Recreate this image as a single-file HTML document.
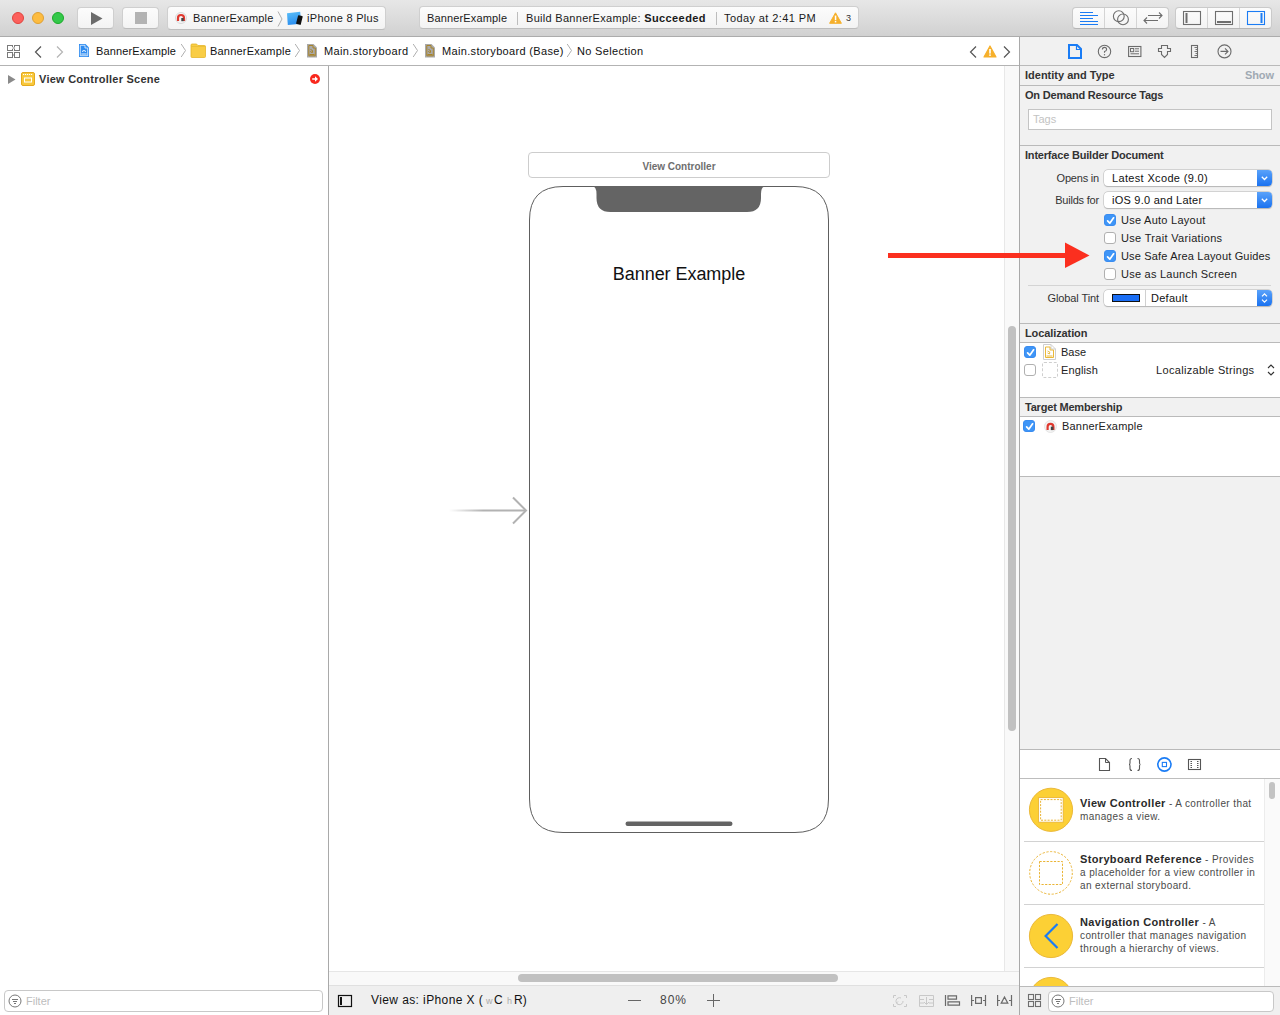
<!DOCTYPE html>
<html><head><meta charset="utf-8">
<style>
*{box-sizing:border-box;margin:0;padding:0}
html,body{width:1280px;height:1015px;overflow:hidden;background:#fff;font-family:"Liberation Sans",sans-serif;color:#262626;font-size:12px}
.a{position:absolute}
.t{position:absolute;white-space:nowrap;line-height:1}
#toolbar{position:absolute;left:0;top:0;width:1280px;height:37px;background:linear-gradient(#e7e7e7,#d1d1d1);border-bottom:1px solid #acacac}
.tl{position:absolute;top:12px;width:12px;height:12px;border-radius:50%}
.btn{position:absolute;top:7px;height:22px;background:linear-gradient(#fcfcfc,#f3f3f3);border:1px solid #cfcfcf;border-bottom-color:#bdbdbd;border-radius:4px}
#crumbs{position:absolute;left:0;top:37px;width:1019px;height:29px;background:#fff;border-bottom:1px solid #b3b3b3}
#nav{position:absolute;left:0;top:66px;width:329px;height:949px;background:#fff;border-right:1px solid #a9a9a9}
#canvas{position:absolute;left:329px;top:66px;width:690px;height:949px;background:#fff}
#insp{position:absolute;left:1019px;top:37px;width:261px;height:978px;background:#f1f1f1;border-left:1px solid #a9a9a9}
.hl{position:absolute;height:1px;background:#c8c8c8}
.cb{position:absolute;width:12px;height:12px;border-radius:3px;background:#fff;border:1px solid #b0b0b0}
.cb.on{background:#3e95f7;border-color:#3a8cf0}
.cb.on svg{position:absolute;left:1px;top:1px}
</style></head><body>
<!-- TOOLBAR -->
<div id="toolbar">
  <div class="tl" style="left:12px;background:#fc605c;border:1px solid #e0443e"></div>
  <div class="tl" style="left:32px;background:#fdbc40;border:1px solid #dea034"></div>
  <div class="tl" style="left:52px;background:#34c84a;border:1px solid #1aab29"></div>
  <div class="btn" style="left:77px;width:37px"><svg class="a" style="left:12px;top:3px" width="13" height="15"><path d="M1 1 L12.5 7.5 L1 14 Z" fill="#6b6b6b"/></svg></div>
  <div class="btn" style="left:122px;width:37px"><div class="a" style="left:12px;top:4px;width:12px;height:12px;background:#b3b3b3"></div></div>
  <div class="btn" style="left:167px;width:219px;top:6px;height:24px">
    <svg class="a" style="left:7px;top:5px" width="12" height="12"><circle cx="6" cy="6" r="5.5" fill="#f4f4f4" stroke="#d8d8d8" stroke-width="1"/><path d="M3 9 V6 A3 3 0 0 1 9 6 V9" fill="none" stroke="#e0392f" stroke-width="2.2"/><rect x="6.3" y="6" width="2.4" height="3.2" fill="#444"/></svg>
    <div class="t" style="left:25px;top:6px;font-size:11px;letter-spacing:0.17px;color:#1a1a1a">BannerExample</div>
    <svg class="a" style="left:109px;top:3px" width="7" height="18"><path d="M1 1.5 L5 9 L1 16.5" fill="none" stroke="#b0b0b0" stroke-width="1"/></svg>
    <svg class="a" style="left:118px;top:4px" width="17" height="15"><defs><linearGradient id="ipg" x1="0" y1="0" x2="0.3" y2="1"><stop offset="0" stop-color="#5cc0f8"/><stop offset="1" stop-color="#2a8ef0"/></linearGradient></defs><path d="M1 2.2 L14.2 0.8 L15 12.8 L1.8 14 Z" fill="url(#ipg)"/><rect x="11" y="4.6" width="4.8" height="9" rx="0.8" fill="#111" transform="rotate(14 13.4 9.1)"/></svg>
    <div class="t" style="left:139px;top:6px;font-size:11px;letter-spacing:0.3px;color:#1a1a1a">iPhone 8 Plus</div>
  </div>
  <div class="btn" style="left:419px;width:440px;top:6px;height:23px">
    <div class="t" style="left:7px;top:6px;font-size:11px;letter-spacing:0.15px;color:#1a1a1a">BannerExample</div>
    <div class="a" style="left:97px;top:5px;width:1px;height:13px;background:#bdbdbd"></div>
    <div class="t" style="left:106px;top:6px;font-size:11px;letter-spacing:0.3px;color:#1a1a1a">Build BannerExample: <b style="letter-spacing:0.4px">Succeeded</b></div>
    <div class="a" style="left:296px;top:5px;width:1px;height:13px;background:#bdbdbd"></div>
    <div class="t" style="left:304px;top:6px;font-size:11px;letter-spacing:0.4px;color:#1a1a1a">Today at 2:41 PM</div>
    <svg class="a" style="left:409px;top:5px" width="13" height="12"><path d="M6.5 0.8 L12.4 11.3 L0.6 11.3 Z" fill="#f6b02c" stroke="#f6b02c" stroke-width="1" stroke-linejoin="round"/><rect x="5.8" y="3.6" width="1.5" height="4.6" fill="#fff"/><rect x="5.8" y="9" width="1.5" height="1.4" fill="#fff"/></svg>
    <div class="t" style="left:426px;top:7px;font-size:9px;color:#333">3</div>
  </div>
  <!-- right groups -->
  <div class="btn" style="left:1072px;width:97px;top:7px;height:22px;border-color:#cacaca;border-bottom-color:#b5b5b5"></div>
  <div class="a" style="left:1104px;top:8px;width:1px;height:20px;background:#d4d4d4"></div>
  <div class="a" style="left:1136px;top:8px;width:1px;height:20px;background:#d4d4d4"></div>
  <div class="btn" style="left:1175px;width:97px;top:7px;height:22px;border-color:#cacaca;border-bottom-color:#b5b5b5"></div>
  <div class="a" style="left:1207px;top:8px;width:1px;height:20px;background:#d4d4d4"></div>
  <div class="a" style="left:1239px;top:8px;width:1px;height:20px;background:#d4d4d4"></div>
  <svg class="a" style="left:1070px;top:0" width="210" height="36">
    <g stroke="#1b7cf4" stroke-width="1.2"><path d="M10 12.5H23M10 15.5H28M10 18.5H23M10 21.5H28M10 24.5H28"/></g>
    <circle cx="48.8" cy="16.2" r="5.4" fill="none" stroke="#6e6e6e" stroke-width="1.1"/><circle cx="53" cy="19.4" r="5.4" fill="none" stroke="#6e6e6e" stroke-width="1.1"/>
    <g fill="none" stroke="#6e6e6e" stroke-width="1.1"><path d="M78 15.5H92M89 12.5L92 15.5L89 18.5M74 20.5H88M77 17.5L74 20.5L77 23.5"/></g>
    <rect x="113.5" y="11.5" width="17" height="13" fill="none" stroke="#6e6e6e" stroke-width="1.1"/><rect x="115.5" y="13" width="2" height="10" fill="#6e6e6e"/>
    <rect x="145.5" y="11.5" width="17" height="13" fill="none" stroke="#6e6e6e" stroke-width="1.1"/><rect x="147" y="21" width="14" height="2" fill="#6e6e6e"/>
    <rect x="177.5" y="11.5" width="17" height="13" fill="none" stroke="#1b7cf4" stroke-width="1.1"/><rect x="190.5" y="13" width="2" height="10" fill="#1b7cf4"/>
  </svg>
</div>
<!-- CRUMBS -->
<div id="crumbs">
  <svg class="a" style="left:7px;top:8px" width="14" height="13"><g fill="none" stroke="#7a7a7a" stroke-width="1"><rect x="0.5" y="0.5" width="5" height="5"/><rect x="7.5" y="0.5" width="5" height="5"/><rect x="0.5" y="7.5" width="5" height="5"/><rect x="7.5" y="7.5" width="5" height="5"/></g><rect x="5" y="2" width="3" height="2" fill="#fff"/><path d="M5.5 3H8M5.5 10H8" stroke="#7a7a7a"/></svg>
  <svg class="a" style="left:33px;top:8px" width="10" height="14"><path d="M8 1.5 L2.5 7 L8 12.5" fill="none" stroke="#555" stroke-width="1.2"/></svg>
  <svg class="a" style="left:55px;top:8px" width="10" height="14"><path d="M2 1.5 L7.5 7 L2 12.5" fill="none" stroke="#b4b4b4" stroke-width="1.2"/></svg>
  <svg class="a" style="left:78px;top:6px" width="12" height="15"><path d="M1 1 H7.5 L11 4.5 V14 H1 Z" fill="#2f8cf0"/><path d="M2.3 2.3 H7 V5 H9.7 V12.7 H2.3 Z" fill="none" stroke="#fff" stroke-width="0.8" opacity="0.9"/><path d="M4 8.5 Q6 6.5 8 8.5" fill="none" stroke="#fff" stroke-width="1"/><path d="M3.3 11H8.7" stroke="#fff" stroke-width="0.9"/></svg>
  <div class="t" style="left:96px;top:9px;font-size:11px;letter-spacing:0.14px;color:#111">BannerExample</div>
  <svg class="a" style="left:180px;top:6px" width="7" height="15"><path d="M1.2 1 L5.5 7.5 L1.2 14" fill="none" stroke="#b0b0b0" stroke-width="1"/></svg>
  <svg class="a" style="left:190px;top:6px" width="16" height="15"><path d="M1 2 Q1 1 2 1 H6 Q7 1 7.5 2 L8 2.5 H14.5 Q15.5 2.5 15.5 3.5 V13.5 Q15.5 14.5 14.5 14.5 H2 Q1 14.5 1 13.5 Z" fill="#f9cd45" stroke="#e5b52a" stroke-width="0.8"/><path d="M1 3.5H15.5" stroke="#e9bd35" stroke-width="0.8"/></svg>
  <div class="t" style="left:210px;top:9px;font-size:11px;letter-spacing:0.21px;color:#111">BannerExample</div>
  <svg class="a" style="left:294px;top:6px" width="7" height="15"><path d="M1.2 1 L5.5 7.5 L1.2 14" fill="none" stroke="#b0b0b0" stroke-width="1"/></svg>
  <svg class="a" style="left:306px;top:6px" width="12" height="15"><path d="M1 1 H7.5 L11 4.5 V14.5 H1 Z" fill="#a9a9a9"/><path d="M2.8 2.5 H7 V5 H9.3 V12.8 H2.8 Z" fill="none" stroke="#a8842a" stroke-width="1"/><path d="M4.5 6.5 Q7.5 7 6.5 9.5 Q5 10 4.5 8" fill="none" stroke="#a8842a" stroke-width="1"/><path d="M3.5 11.5H8.5" stroke="#a8842a" stroke-width="1"/></svg>
  <div class="t" style="left:324px;top:9px;font-size:11px;letter-spacing:0.38px;color:#111">Main.storyboard</div>
  <svg class="a" style="left:412px;top:6px" width="7" height="15"><path d="M1.2 1 L5.5 7.5 L1.2 14" fill="none" stroke="#b0b0b0" stroke-width="1"/></svg>
  <svg class="a" style="left:424px;top:6px" width="12" height="15"><path d="M1 1 H7.5 L11 4.5 V14.5 H1 Z" fill="#a9a9a9"/><path d="M2.8 2.5 H7 V5 H9.3 V12.8 H2.8 Z" fill="none" stroke="#a8842a" stroke-width="1"/><path d="M4.5 6.5 Q7.5 7 6.5 9.5 Q5 10 4.5 8" fill="none" stroke="#a8842a" stroke-width="1"/><path d="M3.5 11.5H8.5" stroke="#a8842a" stroke-width="1"/></svg>
  <div class="t" style="left:442px;top:9px;font-size:11px;letter-spacing:0.34px;color:#111">Main.storyboard (Base)</div>
  <svg class="a" style="left:566px;top:6px" width="7" height="15"><path d="M1.2 1 L5.5 7.5 L1.2 14" fill="none" stroke="#b0b0b0" stroke-width="1"/></svg>
  <div class="t" style="left:577px;top:9px;font-size:11px;letter-spacing:0.33px;color:#111">No Selection</div>
  <svg class="a" style="left:968px;top:8px" width="10" height="14"><path d="M8 1.5 L2.5 7 L8 12.5" fill="none" stroke="#555" stroke-width="1.2"/></svg>
  <svg class="a" style="left:983px;top:8px" width="14" height="13"><path d="M7 1 L13 12 L1 12 Z" fill="#f6b02c" stroke="#f6b02c" stroke-width="1.2" stroke-linejoin="round"/><rect x="6.2" y="4" width="1.6" height="4.6" fill="#fff"/><rect x="6.2" y="9.4" width="1.6" height="1.5" fill="#fff"/></svg>
  <svg class="a" style="left:1002px;top:8px" width="10" height="14"><path d="M2 1.5 L7.5 7 L2 12.5" fill="none" stroke="#555" stroke-width="1.2"/></svg>
</div>
<div id="nav">
  <svg class="a" style="left:8px;top:9px" width="8" height="9"><path d="M0 0 L7.5 4.5 L0 9 Z" fill="#8a8a8a"/></svg>
  <svg class="a" style="left:21px;top:6px" width="14" height="14"><rect x="0.5" y="0.5" width="13" height="13" rx="1.5" fill="#f8c83c" stroke="#e4a91f"/><path d="M2 2.5H12" stroke="#fff" stroke-width="1" stroke-dasharray="1.2 0.8"/><rect x="3.5" y="6" width="7" height="4" fill="none" stroke="#fff" stroke-width="1"/></svg>
  <div class="t" style="left:39px;top:8px;font-size:11px;font-weight:bold;letter-spacing:0.25px;color:#333">View Controller Scene</div>
  <svg class="a" style="left:310px;top:8px" width="10" height="10"><circle cx="5" cy="5" r="5" fill="#f9281d"/><path d="M2.2 4.2H5V2.3L8 5L5 7.7V5.8H2.2Z" fill="#fff"/></svg>
</div>
<div id="canvas"></div>
<!-- canvas content -->
<div class="a" style="left:528px;top:152px;width:302px;height:26px;border:1px solid #cdcdcd;border-radius:4px;background:#fff"></div>
<div class="t" style="left:528px;top:162px;width:302px;text-align:center;font-size:10px;font-weight:bold;color:#6e6e6e">View Controller</div>
<svg class="a" style="left:528px;top:185px" width="302" height="650">
  <path d="M1.5 35 Q1.5 1.5 35 1.5 H267 Q300.5 1.5 300.5 35 V614 Q300.5 647.5 267 647.5 H35 Q1.5 647.5 1.5 614 Z" fill="#fff" stroke="#5e5e5e" stroke-width="1"/>
  <path d="M63.5 1 Q68.5 1.2 68.5 9 V13 Q68.5 27 82.5 27 H219 Q233 27 233 13 V9 Q233 1.2 238 1 Z" fill="#646464"/>
  <rect x="97.5" y="636.5" width="107" height="4.5" rx="2.2" fill="#646464"/>
</svg>
<div class="t" style="left:529px;top:265px;width:300px;text-align:center;font-size:18px;letter-spacing:-0.05px;color:#111">Banner Example</div>
<svg class="a" style="left:440px;top:495px" width="90" height="30">
  <defs><linearGradient id="fade" x1="0" x2="1"><stop offset="0" stop-color="#b2b2b2" stop-opacity="0"/><stop offset="0.45" stop-color="#b2b2b2" stop-opacity="1"/></linearGradient></defs>
  <rect x="9" y="14.5" width="76" height="2" fill="url(#fade)"/>
  <path d="M73 2.5 L86 15.5 L73 28.5" fill="none" stroke="#b2b2b2" stroke-width="2"/>
</svg>
<!-- vertical scroller -->
<div class="a" style="left:1004px;top:66px;width:15px;height:906px;background:#f9f9f9;border-left:1px solid #e8e8e8"></div>
<div class="a" style="left:1008px;top:326px;width:8px;height:405px;border-radius:4px;background:#c1c1c1"></div>
<!-- horizontal scroller -->
<div class="a" style="left:329px;top:971px;width:690px;height:15px;background:#f9f9f9;border-top:1px solid #e6e6e6;border-bottom:1px solid #e0e0e0"></div>
<div class="a" style="left:518px;top:974px;width:320px;height:8px;border-radius:4px;background:#c1c1c1"></div>
<!-- bottom bar -->
<div class="a" style="left:329px;top:986px;width:690px;height:29px;background:#efefef"></div>
<svg class="a" style="left:337px;top:994px" width="16" height="14"><rect x="1.5" y="1.5" width="13" height="11" fill="none" stroke="#111" stroke-width="1.2"/><rect x="3" y="3" width="2" height="8" fill="#111"/></svg>
<div class="t" style="left:371px;top:994px;color:#111;letter-spacing:0.4px">View as: iPhone X (</div>
<div class="t" style="left:486px;top:997px;font-size:9px;color:#aaa">w</div>
<div class="t" style="left:494px;top:994px;color:#111">C</div>
<div class="t" style="left:507px;top:997px;font-size:9px;color:#aaa">h</div>
<div class="t" style="left:514px;top:994px;color:#111">R)</div>
<div class="a" style="left:628px;top:1000px;width:13px;height:1px;background:#666"></div>
<div class="t" style="left:660px;top:994px;color:#444;letter-spacing:1px">80%</div>
<div class="a" style="left:707px;top:1000px;width:13px;height:1px;background:#666"></div>
<div class="a" style="left:713px;top:994px;width:1px;height:13px;background:#666"></div>
<svg class="a" style="left:892px;top:994px" width="125" height="14">
  <g fill="none" stroke="#c8c8c8" stroke-width="1"><path d="M1.5 4V1.5H4M12 1.5H14.5V4M14.5 10V12.5H12M4 12.5H1.5V10"/><path d="M11 7 A3.5 3.5 0 1 1 9 4"/><path d="M6 10.5L4.5 9L6 7.5"/></g>
  <g fill="none" stroke="#c8c8c8" stroke-width="1"><path d="M27.5 1.5H41.5M27.5 12.5H41.5M27.5 1.5V12.5M41.5 1.5V12.5M27.5 5.5H32M37 5.5H41.5M27.5 9H32M37 9H41.5M34.5 3V10M32 8L34.5 10.5L37 8"/></g>
  <g fill="none" stroke="#6a6a6a" stroke-width="1.2"><path d="M53.5 1V12M56 1.8H64.5V5.2H56ZM56 7.8H67.5V11.2H56Z"/></g>
  <g fill="none" stroke="#6a6a6a" stroke-width="1.2"><path d="M79.6 1V12M93.5 1V12M79.6 6.5H82M91 6.5H93.5M83.6 3.6H89.4V9.4H83.6Z"/></g>
  <g fill="none" stroke="#6a6a6a" stroke-width="1.2"><path d="M105.6 1V12M119.5 1V12M105.6 6.5H108M117 6.5H119.5M112.5 3L115.8 9.2H109.2Z"/></g>
</svg>
<div id="insp"></div>
<!-- inspector tabs -->
<svg class="a" style="left:1060px;top:38px" width="180" height="26">
  <path d="M9 7 H17 L21 11 V20 H9 Z" fill="none" stroke="#1a7cf5" stroke-width="2" stroke-linejoin="miter"/><path d="M16.5 7 V11.5 H21" fill="none" stroke="#1a7cf5" stroke-width="1.2"/>
  <circle cx="44.5" cy="13.4" r="6.2" fill="none" stroke="#6b6b6b" stroke-width="1.1"/><path d="M42.4 11.6 Q42.4 9.4 44.5 9.4 Q46.6 9.4 46.6 11.4 Q46.6 12.8 44.5 13.6 V14.8" fill="none" stroke="#6b6b6b" stroke-width="1.1"/><circle cx="44.5" cy="16.8" r="0.7" fill="#6b6b6b"/>
  <rect x="68.6" y="8.5" width="12.3" height="10" fill="none" stroke="#6b6b6b" stroke-width="1.1"/><rect x="70.5" y="10.5" width="3.2" height="3.2" fill="none" stroke="#6b6b6b" stroke-width="1"/><path d="M75 10.8H79M75 13.2H79M70.5 15.8H79" stroke="#6b6b6b" stroke-width="1"/>
  <path d="M101.5 7.5 H107.5 V10.5 H110.5 V13.5 H107.5 V16.5 L104.5 19.5 L101.5 16.5 V13.5 H98.5 V10.5 H101.5 Z" fill="none" stroke="#6b6b6b" stroke-width="1.1"/>
  <rect x="131.5" y="7.5" width="6" height="12" fill="none" stroke="#6b6b6b" stroke-width="1.1"/><path d="M134.5 9.5H137M135.5 11.5H137M134.5 13.5H137M135.5 15.5H137M134.5 17.5H137" stroke="#6b6b6b" stroke-width="0.9"/>
  <circle cx="164.5" cy="13.4" r="6.5" fill="none" stroke="#6b6b6b" stroke-width="1.1"/><path d="M160.5 13.4H168M165 10.4L168 13.4L165 16.4" fill="none" stroke="#6b6b6b" stroke-width="1.1"/>
</svg>
<div class="hl" style="left:1020px;top:65px;width:260px;background:#bababa"></div>
<div class="t" style="left:1025px;top:70px;font-size:11px;font-weight:bold;color:#333">Identity and Type</div>
<div class="t" style="left:1245px;top:70px;font-size:11px;font-weight:bold;color:#a0a9b3;letter-spacing:-0.1px">Show</div>
<div class="hl" style="left:1020px;top:85px;width:260px;background:#bababa"></div>
<div class="t" style="left:1025px;top:90px;font-size:11px;font-weight:bold;color:#333;letter-spacing:-0.2px">On Demand Resource Tags</div>
<div class="a" style="left:1028px;top:109px;width:244px;height:21px;background:#fff;border:1px solid #c4c4c4"></div>
<div class="t" style="left:1033px;top:114px;font-size:11px;color:#c3c3c3">Tags</div>
<div class="hl" style="left:1020px;top:145px;width:260px;background:#bababa"></div>
<div class="t" style="left:1025px;top:150px;font-size:11px;font-weight:bold;color:#333;letter-spacing:-0.2px">Interface Builder Document</div>
<div class="t" style="left:1020px;top:173px;width:79px;text-align:right;font-size:11px;color:#333;letter-spacing:-0.2px">Opens in</div>
<div class="t" style="left:1020px;top:195px;width:79px;text-align:right;font-size:11px;color:#333;letter-spacing:-0.2px">Builds for</div>
<div class="t" style="left:1020px;top:293px;width:79px;text-align:right;font-size:11px;color:#333;letter-spacing:-0.1px">Global Tint</div>
<!-- popups -->
<div class="a" style="left:1104px;top:170px;width:168px;height:16px;background:#fff;border-radius:4px;box-shadow:0 0 0 0.5px #b9b9b9,0 0.5px 1px rgba(0,0,0,0.25)"></div>
<div class="a" style="left:1257px;top:170px;width:15px;height:16px;background:linear-gradient(#5aa2fa,#1a72f0);border-radius:0 4px 4px 0"></div>
<svg class="a" style="left:1257px;top:170px" width="15" height="16"><path d="M4.8 6.8 L7.5 9.5 L10.2 6.8" fill="none" stroke="#fff" stroke-width="1.3"/></svg>
<div class="t" style="left:1112px;top:173px;font-size:11px;color:#111;letter-spacing:0.34px">Latest Xcode (9.0)</div>
<div class="a" style="left:1104px;top:192px;width:168px;height:16px;background:#fff;border-radius:4px;box-shadow:0 0 0 0.5px #b9b9b9,0 0.5px 1px rgba(0,0,0,0.25)"></div>
<div class="a" style="left:1257px;top:192px;width:15px;height:16px;background:linear-gradient(#5aa2fa,#1a72f0);border-radius:0 4px 4px 0"></div>
<svg class="a" style="left:1257px;top:192px" width="15" height="16"><path d="M4.8 6.8 L7.5 9.5 L10.2 6.8" fill="none" stroke="#fff" stroke-width="1.3"/></svg>
<div class="t" style="left:1112px;top:195px;font-size:11px;color:#111;letter-spacing:0.24px">iOS 9.0 and Later</div>
<!-- checkboxes -->
<div class="cb on" style="left:1104px;top:214px"><svg width="10" height="10" style="position:absolute;left:0.5px;top:0.5px"><path d="M1.6 4.9 L3.8 7.2 L7.6 1.8" fill="none" stroke="#fff" stroke-width="1.7" stroke-linecap="round" stroke-linejoin="round"/></svg></div>
<div class="t" style="left:1121px;top:215px;font-size:11px;color:#222;letter-spacing:0.26px">Use Auto Layout</div>
<div class="cb" style="left:1104px;top:232px"></div>
<div class="t" style="left:1121px;top:233px;font-size:11px;color:#222;letter-spacing:0.31px">Use Trait Variations</div>
<div class="cb on" style="left:1104px;top:250px"><svg width="10" height="10" style="position:absolute;left:0.5px;top:0.5px"><path d="M1.6 4.9 L3.8 7.2 L7.6 1.8" fill="none" stroke="#fff" stroke-width="1.7" stroke-linecap="round" stroke-linejoin="round"/></svg></div>
<div class="t" style="left:1121px;top:251px;font-size:11px;color:#222;letter-spacing:0.17px">Use Safe Area Layout Guides</div>
<div class="cb" style="left:1104px;top:268px"></div>
<div class="t" style="left:1121px;top:269px;font-size:11px;color:#222;letter-spacing:0.24px">Use as Launch Screen</div>
<div class="hl" style="left:1028px;top:285px;width:243px;background:#d4d4d4"></div>
<div class="a" style="left:1104px;top:290px;width:168px;height:16px;background:#fff;border-radius:4px;box-shadow:0 0 0 0.5px #b9b9b9,0 0.5px 1px rgba(0,0,0,0.25)"></div>
<div class="a" style="left:1112px;top:294px;width:28px;height:8px;background:#1a6ef5;border:1.5px solid #111"></div>
<div class="a" style="left:1145px;top:290px;width:1px;height:16px;background:#d0d0d0"></div>
<div class="t" style="left:1151px;top:293px;font-size:11px;letter-spacing:0.27px;color:#111">Default</div>
<div class="a" style="left:1257px;top:290px;width:15px;height:16px;background:linear-gradient(#5aa2fa,#1a72f0);border-radius:0 4px 4px 0"></div>
<svg class="a" style="left:1257px;top:290px" width="15" height="16"><path d="M5 6.3 L7.5 3.8 L10 6.3 M5 9.7 L7.5 12.2 L10 9.7" fill="none" stroke="#fff" stroke-width="1.2"/></svg>
<!-- Localization -->
<div class="hl" style="left:1020px;top:323px;width:260px;background:#bababa"></div>
<div class="t" style="left:1025px;top:328px;font-size:11px;font-weight:bold;color:#333;letter-spacing:-0.1px">Localization</div>
<div class="a" style="left:1020px;top:342px;width:260px;height:56px;background:#fff;border-top:1px solid #bababa;border-bottom:1px solid #bababa"></div>
<div class="cb on" style="left:1024px;top:346px"><svg width="10" height="10" style="position:absolute;left:0.5px;top:0.5px"><path d="M1.6 4.9 L3.8 7.2 L7.6 1.8" fill="none" stroke="#fff" stroke-width="1.7" stroke-linecap="round" stroke-linejoin="round"/></svg></div>
<svg class="a" style="left:1043px;top:344px" width="13" height="16"><path d="M0.5 0.5 H8 L12.5 5 V15.5 H0.5 Z" fill="#fff" stroke="#cfcfcf" stroke-width="1"/><path d="M8 0.5 V5 H12.5" fill="none" stroke="#cfcfcf"/><path d="M2.5 3 H7 V6 H10.5 V13.5 H2.5 Z" fill="none" stroke="#eab838" stroke-width="1"/><path d="M4.5 7 Q8 7.5 6.5 10 L4.5 9" fill="none" stroke="#eab838" stroke-width="0.9"/><path d="M3.5 12H9.5" stroke="#eab838"/></svg>
<div class="t" style="left:1061px;top:347px;font-size:11px;color:#222">Base</div>
<div class="cb" style="left:1024px;top:364px"></div>
<div class="a" style="left:1042px;top:362px;width:16px;height:16px;border:1px dashed #cfcfcf;border-radius:2px"></div>
<div class="t" style="left:1061px;top:365px;font-size:11px;color:#222;letter-spacing:0.13px">English</div>
<div class="t" style="left:1156px;top:365px;font-size:11px;color:#222;letter-spacing:0.32px">Localizable Strings</div>
<svg class="a" style="left:1266px;top:363px" width="10" height="14"><path d="M2 5 L5 2 L8 5 M2 9 L5 12 L8 9" fill="none" stroke="#333" stroke-width="1.1"/></svg>
<!-- Target Membership -->
<div class="t" style="left:1025px;top:402px;font-size:11px;font-weight:bold;color:#333;letter-spacing:-0.2px">Target Membership</div>
<div class="a" style="left:1020px;top:416px;width:260px;height:61px;background:#fff;border-top:1px solid #bababa;border-bottom:1px solid #bababa"></div>
<div class="cb on" style="left:1023px;top:420px"><svg width="10" height="10" style="position:absolute;left:0.5px;top:0.5px"><path d="M1.6 4.9 L3.8 7.2 L7.6 1.8" fill="none" stroke="#fff" stroke-width="1.7" stroke-linecap="round" stroke-linejoin="round"/></svg></div>
<svg class="a" style="left:1044px;top:420px" width="13" height="13"><circle cx="6.5" cy="6.5" r="6" fill="#f4f4f4" stroke="#e0e0e0" stroke-width="0.8"/><path d="M3.6 10 V6.8 A2.9 2.9 0 0 1 9.4 6.8 V10" fill="none" stroke="#e0392f" stroke-width="2.2"/><rect x="6.8" y="6.6" width="2.6" height="3.5" fill="#444"/></svg>
<div class="t" style="left:1062px;top:421px;font-size:11px;color:#222;letter-spacing:0.19px">BannerExample</div>
<!-- library -->
<div class="hl" style="left:1020px;top:749px;width:260px;background:#b9b9b9"></div>
<div class="a" style="left:1020px;top:750px;width:260px;height:28px;background:#fff"></div>
<svg class="a" style="left:1090px;top:750px" width="120" height="28">
  <path d="M9.5 8.5 H15.5 L19.5 12.5 V20.5 H9.5 Z" fill="none" stroke="#555" stroke-width="1.1"/><path d="M15.5 8.5 V12.5 H19.5" fill="none" stroke="#555" stroke-width="1"/>
  <path d="M42 8.5 Q40 8.5 40 10.5 V13 Q40 14.5 39 14.5 Q40 14.5 40 16 V18.5 Q40 20.5 42 20.5 M47.5 8.5 Q49.5 8.5 49.5 10.5 V13 Q49.5 14.5 50.5 14.5 Q49.5 14.5 49.5 16 V18.5 Q49.5 20.5 47.5 20.5" fill="none" stroke="#555" stroke-width="1.1"/>
  <circle cx="74.4" cy="14.5" r="6.6" fill="none" stroke="#1a7cf5" stroke-width="1.6"/><rect x="72.3" y="12.4" width="4.2" height="4.2" fill="none" stroke="#1a7cf5" stroke-width="1.1"/>
  <rect x="98.5" y="9.5" width="12" height="10" fill="none" stroke="#555" stroke-width="1.1"/><path d="M100.5 11.5H102M100.5 13.5H102M100.5 15.5H102M100.5 17.5H102M107 11.5H108.5M107 13.5H108.5M107 15.5H108.5M107 17.5H108.5" stroke="#555" stroke-width="1"/>
</svg>
<div class="hl" style="left:1020px;top:778px;width:260px;background:#bdbdbd"></div>
<div class="a" style="left:1020px;top:779px;width:260px;height:207px;background:#fff"></div>
<div class="a" style="left:1264px;top:779px;width:1px;height:207px;background:#ececec"></div>
<div class="a" style="left:1265px;top:779px;width:15px;height:207px;background:#fafafa"></div>
<div class="a" style="left:1269px;top:782px;width:6px;height:17px;border-radius:3px;background:#c3c3c3"></div>
<svg class="a" style="left:1020px;top:779px" width="244" height="207">
  <circle cx="31" cy="30.8" r="21.6" fill="#fcd035" stroke="#e8b330" stroke-width="0.9"/>
  <rect x="18.6" y="18.6" width="24.6" height="24.6" fill="#fff" stroke="#eab434" stroke-width="0.9"/>
  <rect x="20.6" y="20.6" width="20.6" height="20.6" fill="none" stroke="#eab434" stroke-width="1" stroke-dasharray="2 1.3"/>
  <rect x="4" y="62" width="240" height="1" fill="#d2d2d2"/>
  <circle cx="31" cy="93.9" r="21.3" fill="none" stroke="#eab434" stroke-width="1" stroke-dasharray="2.2 1.6"/>
  <rect x="19.5" y="82.5" width="23" height="23" fill="none" stroke="#eab434" stroke-width="1" stroke-dasharray="2.2 1.4"/>
  <rect x="4" y="125" width="240" height="1" fill="#d2d2d2"/>
  <circle cx="31" cy="157" r="21.6" fill="#fcd035" stroke="#e8b330" stroke-width="0.9"/>
  <path d="M37.5 145 L25.6 157 L37.5 169" fill="none" stroke="#1a7cf5" stroke-width="2.2"/>
  <rect x="4" y="188" width="240" height="1" fill="#d2d2d2"/>
  <circle cx="31" cy="220" r="21.6" fill="#fcd035" stroke="#e8b330" stroke-width="0.9"/>
</svg>
<div class="a" style="left:1080px;top:797px;width:184px;font-size:10px;line-height:13px;letter-spacing:0.4px;color:#4a4a4a;white-space:nowrap"><b style="font-size:11px;letter-spacing:0.35px;color:#2a2a2a">View Controller</b> - A controller that<br>manages a view.</div>
<div class="a" style="left:1080px;top:853px;width:184px;font-size:10px;line-height:13.2px;letter-spacing:0.4px;color:#4a4a4a;white-space:nowrap"><b style="font-size:11px;letter-spacing:0.35px;color:#2a2a2a">Storyboard Reference</b> - Provides<br>a placeholder for a view controller in<br>an external storyboard.</div>
<div class="a" style="left:1080px;top:916px;width:184px;font-size:10px;line-height:13.2px;letter-spacing:0.4px;color:#4a4a4a;white-space:nowrap"><b style="font-size:11px;letter-spacing:0.35px;color:#2a2a2a">Navigation Controller</b> - A<br>controller that manages navigation<br>through a hierarchy of views.</div>
<div class="hl" style="left:1020px;top:986px;width:260px;background:#bababa"></div>
<div class="a" style="left:1020px;top:987px;width:260px;height:28px;background:#f0f0f0"></div>
<svg class="a" style="left:1027px;top:993px" width="15" height="15"><g fill="none" stroke="#6e6e6e" stroke-width="1.1"><rect x="1.5" y="1.5" width="5" height="5"/><rect x="8.5" y="1.5" width="5" height="5"/><rect x="1.5" y="8.5" width="5" height="5"/><rect x="8.5" y="8.5" width="5" height="5"/></g></svg>
<div class="a" style="left:1048px;top:991px;width:226px;height:21px;background:#fff;border:1px solid #c8c8c8;border-radius:4px"></div>
<svg class="a" style="left:1051px;top:994px" width="14" height="14"><circle cx="7" cy="7" r="6" fill="none" stroke="#777" stroke-width="1"/><path d="M4 5.5H10M5 7.5H9M6 9.5H8" stroke="#777" stroke-width="1"/></svg>
<div class="t" style="left:1069px;top:996px;font-size:11px;color:#bdbdbd">Filter</div>
<!-- left filter -->
<div class="a" style="left:4px;top:990px;width:319px;height:22px;background:#fff;border:1px solid #c8c8c8;border-radius:4px"></div>
<svg class="a" style="left:8px;top:994px" width="14" height="14"><circle cx="7" cy="7" r="6" fill="none" stroke="#777" stroke-width="1"/><path d="M4 5.5H10M5 7.5H9M6 9.5H8" stroke="#777" stroke-width="1"/></svg>
<div class="t" style="left:26px;top:996px;font-size:11px;color:#bdbdbd">Filter</div>
<!-- red arrow -->
<svg class="a" style="left:880px;top:240px" width="215" height="30">
  <rect x="8" y="13" width="180" height="5" fill="#fb2f1f"/>
  <path d="M185 2.5 L209.5 15.5 L185 28 Z" fill="#fb2f1f"/>
</svg>
</body></html>
